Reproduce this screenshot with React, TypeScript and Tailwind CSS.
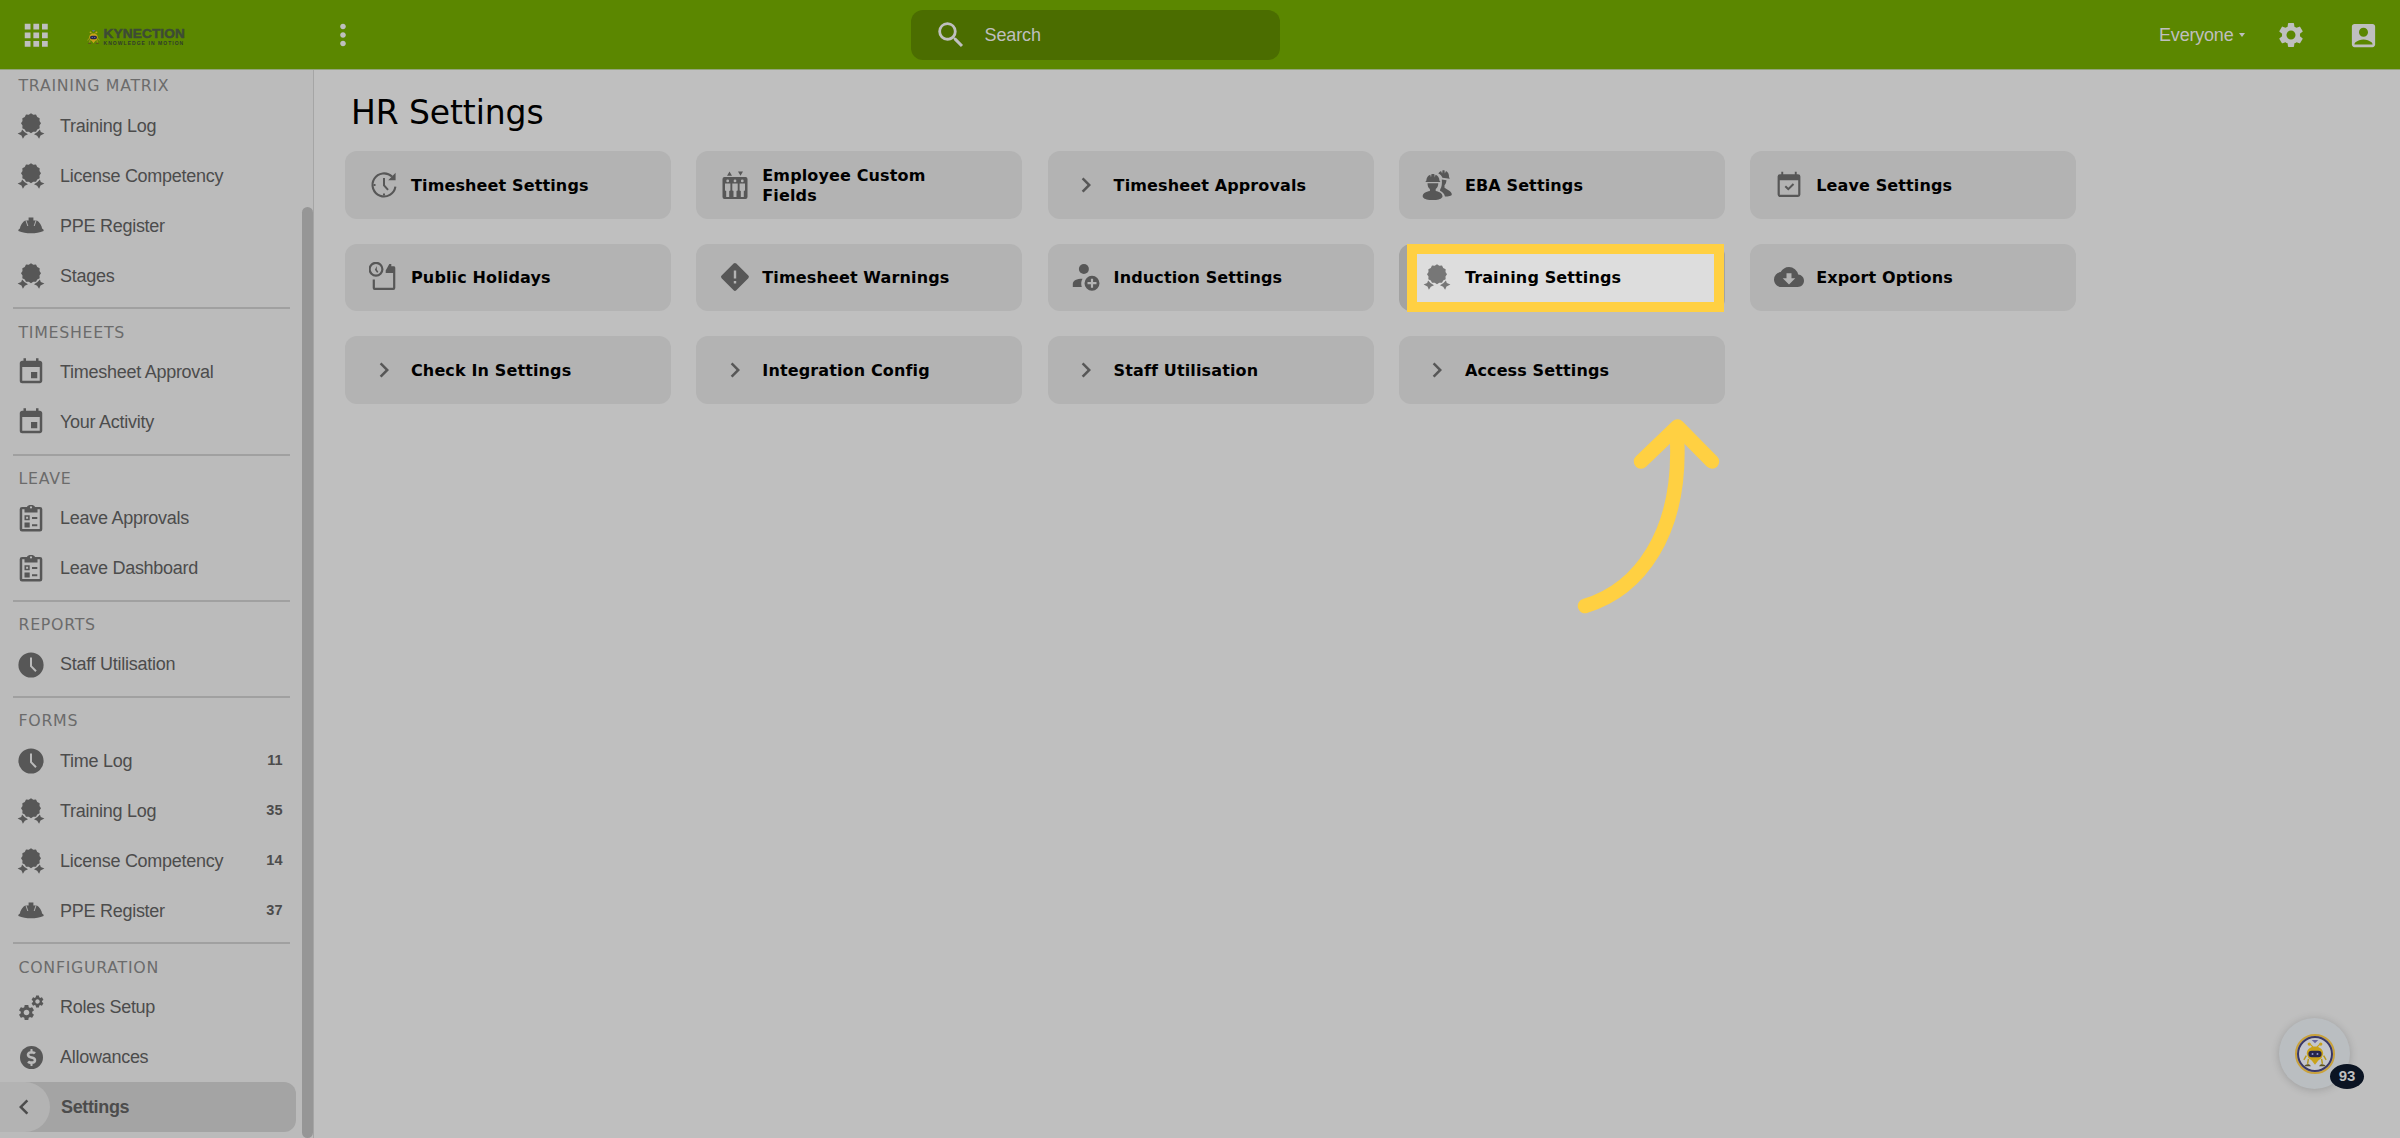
import React from "react";
import { MdApps, MdMoreVert, MdSearch, MdSettings, MdAccountBox, MdEvent, MdCloudDownload, MdChevronRight, MdChevronLeft } from "react-icons/md";
import { FaDollarSign } from "react-icons/fa";

type IconName =
  | "award" | "hat" | "event" | "ballot" | "clock" | "gears" | "dollar"
  | "timer" | "people" | "chevron" | "workers" | "check" | "holiday" | "warning" | "induct" | "cloud";

const rosette = Array.from({ length: 24 }, (_, i) => {
  const r = i % 2 ? 8.8 : 10;
  const a = (i * Math.PI) / 12 - Math.PI / 2;
  return `${(15 + r * Math.cos(a)).toFixed(2)},${(12.2 + r * Math.sin(a)).toFixed(2)}`;
}).join(" ");

function Icon({ name }: { name: IconName }) {
  const svg = (children: React.ReactNode) => (
    <svg viewBox="0 0 30 30" width="30" height="30" fill="currentColor" className="shrink-0">{children}</svg>
  );
  switch (name) {
    case "award":
      return svg(<>
        <polygon points={rosette} />
        <path d="M1.600 22.600l3.600-1.500.9-2.600 2.400 2.500 3.500 2.300-3.200 1.400-1.900 3.100-1.400-3.300zM28.400 22.600l-3.600-1.500-.9-2.600-2.400 2.500-3.500 2.300 3.200 1.400 1.900 3.100 1.400-3.300z" />
      </>);
    case "hat":
      return svg(<>
        <path d="M12.600 6.600h4.800v2.800h.7l2.400-.2c3 1.600 5.300 5 5.800 9.300H3.700c.5-4.300 2.800-7.700 5.800-9.300l2.400.2h.7z" />
        <path d="M9.800 9l2 6M20.200 9l-2 6" stroke="#bbbbbb" strokeWidth="0.900" />
        <path d="M3.500 17.800h23c1 .7 1.300 1.300 1.100 2.100-7.500 3.200-17.700 3.200-25.200 0-.2-.8.1-1.400 1.100-2.100z" />
      </>);
    case "event": return <MdEvent size={30} className="shrink-0" />;
    case "ballot":
      return svg(
        <g transform="translate(0 -1.200)">
          <path fillRule="evenodd" d="M6 4.200h5c.7-2.600 7.300-2.600 8 0h5a2.300 2.300 0 0 1 2.300 2.300v20a2.300 2.300 0 0 1-2.300 2.300H6a2.300 2.300 0 0 1-2.300-2.300v-20A2.300 2.300 0 0 1 6 4.200zM6.200 6.500v19.800h17.600V6.500h-2.300v3.200h-13V6.500zM15 3.500a1.100 1.100 0 1 0 0 2.200 1.100 1.100 0 0 0 0-2.200z" />
          <path fillRule="evenodd" d="M8.500 12.500h5.200v5H8.500zm1.600 1.500v2h2v-2zM8.500 19.800h5.200v5H8.500zM16 14.200h5.300v2H16zM16 21.400h5.300v2H16z" />
        </g>);
    case "clock":
      return svg(<path fillRule="evenodd" d="M15 2.400a12.600 12.600 0 1 0 0 25.200 12.600 12.600 0 0 0 0-25.200zM14 7.500h2v8.200l4.700 4.900-1.400 1.300L14 16.500z" />);
    case "gears":
      return (
        <span className="relative block h-[30px] w-[30px] shrink-0">
          <MdSettings size={19} className="absolute top-[10.500px] left-[0.500px]" />
          <MdSettings size={15} className="absolute top-[1.500px] left-[14.200px]" />
        </span>
      );
    case "dollar":
      return (
        <span className="flex h-[30px] w-[30px] shrink-0 items-center justify-center">
          <span className="flex h-[23px] w-[23px] items-center justify-center rounded-full bg-current">
            <FaDollarSign size={17} color="#bbbbbb" />
          </span>
        </span>
      );
    case "timer":
      return svg(<>
        <path d="M23 6.600A11.500 11.500 0 1 0 26.400 16.600" fill="none" stroke="currentColor" strokeWidth="2.100" />
        <path d="M26.600 2.800v7.400h-7.400zM14 8h2v7l3.800 4.200-1.500 1.200L14 15.700zM14 23.500h2v2h-2zM4.500 14h2v2h-2z" />
      </>);
    case "people":
      return svg(<>
        <path d="M9.500 1.500l2.500 4.200H7zM20.500 5.700l2.500-4.200h-5z" />
        <path fillRule="evenodd" d="M4.500 7h21a2 2 0 0 1 2 2v18a2 2 0 0 1-2 2h-21a2 2 0 0 1-2-2V9a2 2 0 0 1 2-2zM5 13.500v7l1.200.5v6h3v-6l1.200-.5v-7zM12.300 13.500v7l1.200.5v6h3v-6l1.200-.5v-7zM19.600 13.500v7l1.200.5v6h3v-6l1.200-.5v-7zM7.700 9.500a1.400 1.400 0 1 0 0 2.800 1.400 1.400 0 0 0 0-2.800zM15 9.500a1.400 1.400 0 1 0 0 2.800 1.400 1.400 0 0 0 0-2.800zM22.300 9.500a1.400 1.400 0 1 0 0 2.800 1.400 1.400 0 0 0 0-2.800z" />
      </>);
    case "chevron": return <MdChevronRight size={30} className="shrink-0" />;
    case "workers":
      return svg(<>
        <path d="M4.300 10.700c.2-3.200 1.800-5.200 4-6l.7 2.800.5-3.500h2.800l.5 3.500.7-2.800c2.200.8 3.800 2.800 4 6l1 1.200H3.300z" />
        <path d="M5.500 13.200h10.800c0 2.600-1 4.600-2.600 5.800v2c3.700.7 6.800 2.500 6.800 5.200 0 2.300-4 4-9.800 4s-10-1.700-10-4c0-2.700 3.100-4.500 7.200-5.200v-2c-1.600-1.200-2.400-3.200-2.400-5.800z" />
        <path d="M16.300 3.500c.8-1.300 1.600-2 2.700-2.500l1.200 2.500.3-3.300h2l.3 3.300 1.200-2.500c2 .9 3.200 3 3 6l.8 1.800-7.400-1c-.6-2-2-3.600-4.100-4.300zM19.800 9.500l4.700.8c-.3 2.400-.8 3.700-2 5v2.500c2 1.500 7.300 3.500 7.300 6.500 0 2-3.500 2.200-6.800 2.200-.7-2.700-2.500-4.600-5-5.700l.2-1.500c1.500-2.300 2-5.500 1.600-9.800z" />
      </>);
    case "check":
      return svg(<path fillRule="evenodd" d="M7.300 1.700h1.900v2.500h11.600V1.700h1.900v2.500H24a2.400 2.400 0 0 1 2.400 2.400v18a2.400 2.400 0 0 1-2.400 2.400H6a2.400 2.400 0 0 1-2.400-2.400v-18A2.400 2.400 0 0 1 6 4.200h1.300zM5.800 10.300v14.500h18.400V10.300zM12 15.500l2.300 2.300 4.500-4.500 1.400 1.400-5.900 5.900-3.700-3.700z" />);
    case "holiday":
      return svg(
        <g transform="translate(-0.500 0)">
          <path fillRule="evenodd" d="M7.500-.3a7.500 7.500 0 1 0 0 15 7.500 7.500 0 0 0 0-15zm0 2.200a5.300 5.300 0 1 1 0 10.600 5.300 5.300 0 0 1 0-10.600zM8.300 4v3.600l1.600 2.400-1.300.8L6.400 7.800z" />
          <path d="M20.800 2h2v2.200h2.500c.8 0 1.500.7 1.500 1.500V26a1.900 1.900 0 0 1-1.900 1.900H6.100A1.900 1.900 0 0 1 4.200 26v-8.500h2.200v8.200h18.200V11h-7.400V8.500z" />
        </g>);
    case "warning":
      return svg(<path fillRule="evenodd" d="M13.600 1.600L1.600 13.600a1.900 1.900 0 0 0 0 2.700l12 12a1.900 1.900 0 0 0 2.700 0l12-12a1.900 1.900 0 0 0 0-2.700l-12-12a1.900 1.900 0 0 0-2.700 0zM13.800 8.500h2.400v8h-2.400zM13.800 19h2.400v2.500h-2.400z" />);
    case "induct":
      return svg(
        <g transform="translate(1.200 0)">
          <circle cx="11.700" cy="7" r="5" />
          <path d="M.6 25v-3c0-3.500 4-5.300 9.700-5.300-1.500 2.600-1.600 5.600-.7 8.300z" />
          <path fillRule="evenodd" d="M19.800 13.700a7.500 7.500 0 1 0 0 15 7.500 7.500 0 0 0 0-15zM18.700 16.700h2.200v3.400h3.400v2.200h-3.400v3.400h-2.200v-3.400h-3.400v-2.200h3.400z" />
        </g>);
    case "cloud": return <MdCloudDownload size={30} className="shrink-0" />;
  }
}

type Item = { label: string; icon: IconName; count?: number };
const sections: { title: string; items: Item[] }[] = [
  { title: "TRAINING MATRIX", items: [
    { label: "Training Log", icon: "award" }, { label: "License Competency", icon: "award" },
    { label: "PPE Register", icon: "hat" }, { label: "Stages", icon: "award" }] },
  { title: "TIMESHEETS", items: [{ label: "Timesheet Approval", icon: "event" }, { label: "Your Activity", icon: "event" }] },
  { title: "LEAVE", items: [{ label: "Leave Approvals", icon: "ballot" }, { label: "Leave Dashboard", icon: "ballot" }] },
  { title: "REPORTS", items: [{ label: "Staff Utilisation", icon: "clock" }] },
  { title: "FORMS", items: [
    { label: "Time Log", icon: "clock", count: 11 }, { label: "Training Log", icon: "award", count: 35 },
    { label: "License Competency", icon: "award", count: 14 }, { label: "PPE Register", icon: "hat", count: 37 }] },
  { title: "CONFIGURATION", items: [{ label: "Roles Setup", icon: "gears" }, { label: "Allowances", icon: "dollar" }] },
];

const cards: { label: string; icon: IconName; active?: boolean }[] = [
  { label: "Timesheet Settings", icon: "timer" },
  { label: "Employee Custom Fields", icon: "people" },
  { label: "Timesheet Approvals", icon: "chevron" },
  { label: "EBA Settings", icon: "workers" },
  { label: "Leave Settings", icon: "check" },
  { label: "Public Holidays", icon: "holiday" },
  { label: "Timesheet Warnings", icon: "warning" },
  { label: "Induction Settings", icon: "induct" },
  { label: "Training Settings", icon: "award", active: true },
  { label: "Export Options", icon: "cloud" },
  { label: "Check In Settings", icon: "chevron" },
  { label: "Integration Config", icon: "chevron" },
  { label: "Staff Utilisation", icon: "chevron" },
  { label: "Access Settings", icon: "chevron" },
];

function Bee({ className }: { className: string }) {
  return (
    <svg viewBox="0 0 30 34" className={className}>
      <path d="M9 5l5 5M21 5l-5 5" stroke="#c9a21a" strokeWidth="1.500" />
      <circle cx="8" cy="5" r="2" fill="#c9a21a" /><circle cx="22" cy="5" r="2" fill="#c9a21a" />
      <path d="M11 0h8l-4 4z" fill="#6a68a0" />
      <path d="M5 17c0-5.500 4.500-9 10-9s10 3.500 10 9l-2 5-4 3-4 5-4-5-4-3z" fill="#c9a21a" />
      <rect x="7" y="13" width="16" height="8" rx="4" fill="#26254a" />
      <circle cx="12" cy="17" r="1.200" fill="#8f93c7" /><circle cx="18" cy="17" r="1.200" fill="#8f93c7" />
      <path d="M4.500 19l-3 5M25.500 19l3 5M7 23l-1 6M23 23l1 6" stroke="#b8991f" strokeWidth="1.800" fill="none" />
      <path d="M2 32c1-3 7-4 8 0zM20 32c1-4 7-3 8 0z" fill="#5e5420" />
    </svg>
  );
}

function TopBar() {
  return (
    <header className="flex h-[70px] w-full items-center border-b border-[#93a47b] bg-[#5b8700] pt-px text-[#bfbfbf]">
      <MdApps size={34.500} className="ml-[19px] shrink-0" />
      <div className="ml-[33px] flex w-[100px] shrink-0 items-center gap-[4px] pt-[4px]">
        <Bee className="h-[17px] w-[13px] shrink-0" />
        <div className="flex flex-col text-[#3d4b35]">
          <span className="h-[12px] font-['Liberation_Sans'] text-[13.600px] leading-[12px] font-bold tracking-[0.160px] [-webkit-text-stroke:0.5px_#3d4b35]">KYNECTION</span>
          <span className="mt-px h-[5px] font-['Liberation_Sans'] text-[5px] leading-[5px] font-bold tracking-[1.050px] whitespace-nowrap text-[#2f3a2e]">KNOWLEDGE IN MOTION</span>
        </div>
      </div>
      <MdMoreVert size={34} className="ml-[139px] shrink-0" />
      <div className="ml-[551px] flex h-[50px] w-[369px] shrink-0 items-center rounded-[12px] bg-[#4b6d00]">
        <MdSearch size={34} className="ml-[23px]" />
        <span className="ml-[17px] font-['Liberation_Sans'] text-[18px] tracking-[-0.100px]">Search</span>
      </div>
      <div className="mr-[21px] ml-auto flex items-center">
        <span className="font-['Liberation_Sans'] text-[18px] tracking-[-0.200px]">Everyone</span>
        <span className="ml-[5.500px] border-x-[3.800px] border-t-[4px] border-x-transparent border-t-[#bfbfbf]" />
        <MdSettings size={30} className="ml-[31px]" />
        <MdAccountBox size={31} className="ml-[42px]" />
      </div>
    </header>
  );
}

function Sidebar() {
  return (
    <aside className="flex h-full w-[314px] shrink-0 justify-between border-r border-[#a5a5a5] bg-[#bbbbbb]">
      <nav className="w-[296px] font-['Liberation_Sans'] text-[#4c4c4c]">
        {sections.map((s, i) => (
          <section key={s.title} className="pb-[6.250px]">
            <div className={i === 0
              ? "flex h-[31px] items-center pt-px pl-[18.500px]"
              : "ml-[12.500px] flex h-[40px] w-[277.500px] items-center border-t-2 border-[#a0a0a0] pt-[8.500px] pl-[6px]"}>
              <h2 className="font-['DejaVu_Sans'] text-[15.800px] leading-none tracking-[0.700px] text-[#6b6b6b]">{s.title}</h2>
            </div>
            {s.items.map((it) => (
              <div key={it.label} className="flex h-[50px] items-center pl-[16px]">
                <span className="flex text-[#575757]"><Icon name={it.icon} /></span>
                <span className="ml-[14px] text-[18px] tracking-[-0.270px]">{it.label}</span>
                {it.count !== undefined && <span className="mr-[13.500px] ml-auto text-[14.500px] font-bold">{it.count}</span>}
              </div>
            ))}
            {s.title === "CONFIGURATION" && (
              <div className="flex h-[50px] items-center rounded-r-[12px] bg-[#a4a4a4]">
                <span className="flex h-[50px] w-[50px] items-center rounded-r-full bg-[#b3b3b3] pl-[9px]"><MdChevronLeft size={30} color="#4c4c4c" /></span>
                <span className="ml-[11px] text-[18px] font-bold tracking-[-0.350px]">Settings</span>
              </div>
            )}
          </section>
        ))}
      </nav>
      <div className="mt-[137px] w-[11px] rounded-full bg-[#969696]" />
    </aside>
  );
}

export default function App() {
  return (
    <div className="relative flex h-[1138px] w-[2400px] flex-col overflow-hidden bg-[#bfbfbf]">
      <TopBar />
      <div className="flex h-[1068px]">
        <Sidebar />
        <main className="pl-[31px] font-['DejaVu_Sans'] text-black">
          <h1 className="mt-[23px] ml-[6px] h-[40px] text-[33px] leading-[40px] tracking-[-0.100px]">HR Settings</h1>
          <div className="mt-[18px] grid grid-cols-[repeat(5,326px)] gap-x-[25.300px] gap-y-[25px]">
            {cards.map((c) => (
              <div key={c.label} className={`relative flex h-[67.500px] items-center rounded-[12px] pl-[23.500px] ${c.active ? "bg-[#a3a3a3]" : "bg-[#b3b3b3]"}`}>
                {c.active && <span className="absolute top-0 left-[8px] h-[68px] w-[317px] border-[10px] border-[#ffd042] bg-[#dddddd]" />}
                <span className={`relative flex ${c.active ? "text-[#777777]" : "text-[#575757]"}`}><Icon name={c.icon} /></span>
                <span className="relative ml-[12.500px] w-[200px] pt-[2px] text-[16px] leading-[20px] font-bold tracking-[0.130px]">{c.label}</span>
              </div>
            ))}
          </div>
        </main>
      </div>
      <svg className="absolute top-[409px] left-[1570px]" width="160" height="210" viewBox="0 0 160 210" fill="none" stroke="#ffd042" strokeWidth="14.500" strokeLinecap="round" strokeLinejoin="round">
        <path d="M15 197C68 181 112 126 107 28" />
        <path d="M71 52.500L107.500 17.500 142 52.500" />
      </svg>
      <div className="absolute top-[1018px] left-[2279px] flex h-[71px] w-[71px] items-center justify-center rounded-full bg-[#babec1] shadow-[0_1px_8px_rgba(0,0,0,0.18)]">
        <div className="flex h-[40px] w-[40px] items-center justify-center rounded-full border-2 border-[#c9a23c] bg-[#c4c6cc]">
          <div className="flex h-[36px] w-[36px] items-center justify-center rounded-full border-2 border-[#3a3866]">
            <Bee className="h-[28px] w-[26px]" />
          </div>
        </div>
      </div>
      <div className="absolute top-[1064px] left-[2330px] flex h-[25px] w-[34px] items-center justify-center rounded-[50%] bg-[#0b1423] font-['Liberation_Sans'] text-[15px] font-bold text-[#bfbfbf]">93</div>
    </div>
  );
}
